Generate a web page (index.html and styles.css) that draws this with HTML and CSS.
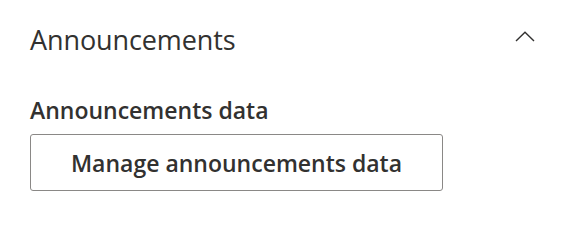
FILE: index.html
```html
<!DOCTYPE html>
<html lang="en">
<head>
  <meta charset="UTF-8">
  <title>Announcements</title>
  <link rel="stylesheet" href="styles.css">
</head>
<body>
  <div class="section">
    <div class="section-header">
      <h2 class="section-title">Announcements</h2>
      <button class="collapse-btn" aria-label="Collapse">
        <svg width="20" height="11" viewBox="0 0 20 11">
          <path d="M1 10 L10 1.2 L19 10" fill="none" stroke="#323130" stroke-width="1.4"/>
        </svg>
      </button>
    </div>
    <div class="field">
      <div class="field-label">Announcements data</div>
      <button class="manage-btn">Manage announcements data</button>
    </div>
  </div>
</body>
</html>
```

FILE: styles.css
```css
body {
  margin: 0;
  background-color: #fff;
  color: #323130;
  font-family: "Open Sans", Arial, sans-serif;
}

.section {
  padding: 19px 39px 0 30px;
}

.section-header {
  display: flex;
  justify-content: space-between;
  align-items: center;
  height: 40px;
}

.section-title {
  margin: 0;
  font-size: 27px;
  font-weight: 400;
  letter-spacing: -0.1px;
}

.collapse-btn {
  background: none;
  border: none;
  padding: 0;
  margin-top: -6px;
  display: flex;
}

.field {
  margin-top: 37px;
}

.field-label {
  font-size: 23px;
  font-weight: 600;
  line-height: 28px;
  letter-spacing: 0;
}

.manage-btn {
  margin-top: 10px;
  width: 413px;
  height: 57px;
  background-color: #fff;
  border: 1px solid #8a8886;
  border-radius: 3px;
  color: #323130;
  font-family: "Open Sans", Arial, sans-serif;
  font-size: 23px;
  font-weight: 600;
}
```
